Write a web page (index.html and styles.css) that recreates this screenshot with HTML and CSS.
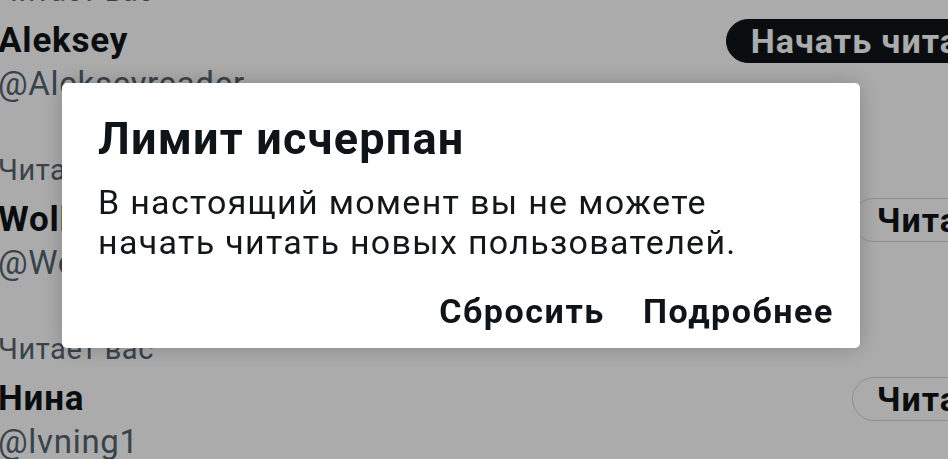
FILE: index.html
```html
<!DOCTYPE html>
<html lang="ru">
<head>
    <meta charset="UTF-8">
    <meta name="viewport" content="width=device-width, initial-scale=1.0">
    <title>Читатели</title>
    <link rel="stylesheet" href="styles.css">
</head>
<body>

<!-- Followers list -->
<div class="people">
    <div class="person">
        <div class="person-info">
            <div class="follows-you">Читает вас</div>
            <div class="person-name">Aleksey</div>
            <div class="person-handle">@Alekseyreader</div>
        </div>
        <button class="follow-btn follow-btn-dark">Начать читать</button>
    </div>
    <div class="person">
        <div class="person-info">
            <div class="follows-you">Читает вас</div>
            <div class="person-name">Wolle</div>
            <div class="person-handle">@Wolle_sk</div>
        </div>
        <button class="follow-btn">Читать</button>
    </div>
    <div class="person">
        <div class="person-info">
            <div class="follows-you">Читает вас</div>
            <div class="person-name">Нина</div>
            <div class="person-handle">@lvning1</div>
        </div>
        <button class="follow-btn">Читать</button>
    </div>
</div>

<!-- Limit dialog -->
<div class="overlay">
    <div class="dialog">
        <h2 class="dialog-title">Лимит исчерпан</h2>
        <p class="dialog-text">В настоящий момент вы не можете начать читать новых пользователей.</p>
        <div class="dialog-actions">
            <button class="dialog-btn">Сбросить</button>
            <button class="dialog-btn">Подробнее</button>
        </div>
    </div>
</div>

</body>
</html>
```

FILE: styles.css
```css
body {
    margin: 0;
    padding: 0;
    background: #fff;
    color: #0f1419;
    font-family: Roboto, "Noto Sans", sans-serif;
    overflow: hidden;
}
.people {
    width: 1024px;
    margin: -56px 0 0 -2px;
}
.person {
    display: flex;
    justify-content: space-between;
    align-items: flex-start;
    padding: 22px 0 22px;
}
.follows-you {
    font-size: 29px;
    line-height: 50px;
    letter-spacing: 0.6px;
    color: #536471;
}
.person-name {
    font-size: 35px;
    line-height: 50px;
    letter-spacing: 0.8px;
    font-weight: bold;
}
.person-handle {
    font-size: 33px;
    line-height: 35px;
    letter-spacing: 0.7px;
    color: #536471;
}
.follow-btn {
    margin-top: 53px;
    padding: 0 24px;
    height: 44px;
    border: 1px solid #cfd9de;
    border-radius: 22px;
    background: #fff;
    color: #0f1419;
    font-family: Roboto, sans-serif;
    font-size: 34px;
    font-weight: bold;
    line-height: 42px;
    letter-spacing: 1px;
}
.follow-btn-dark {
    background: #0f1419;
    border-color: #0f1419;
    color: #fff;
}
.overlay {
    position: fixed;
    top: 0;
    left: 0;
    right: 0;
    bottom: 0;
    background: rgba(0, 0, 0, 0.33);
}
.dialog {
    position: absolute;
    left: 62px;
    top: 83px;
    width: 798px;
    height: 265px;
    box-sizing: border-box;
    padding: 30px 26px 0 36px;
    background: #fff;
    border-radius: 5px;
    box-shadow: 0 0 22px rgba(0, 0, 0, 0.22);
}
.dialog-title {
    margin: 0;
    font-size: 45px;
    line-height: 52px;
    letter-spacing: 1.2px;
    font-weight: bold;
    color: #0f1419;
}
.dialog-text {
    max-width: 680px;
    margin: 17px 0 0;
    font-size: 34px;
    line-height: 40px;
    letter-spacing: 1.3px;
    color: #14171a;
}
.dialog-actions {
    display: flex;
    justify-content: flex-end;
    gap: 38px;
    margin-top: 29px;
}
.dialog-btn {
    padding: 0;
    border: none;
    background: none;
    font-family: Roboto, sans-serif;
    font-size: 34px;
    line-height: 40px;
    letter-spacing: 1.6px;
    font-weight: bold;
    color: #0f1419;
}
```
